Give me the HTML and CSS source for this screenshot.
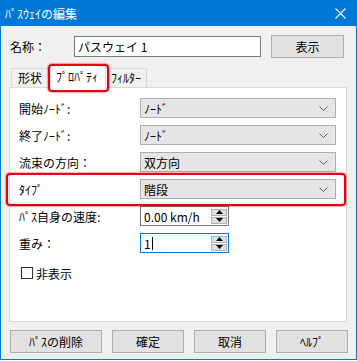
FILE: index.html
```html
<!DOCTYPE html>
<html lang="ja">
<head>
<meta charset="utf-8">
<link rel="stylesheet" href="styles.css">
</head>
<body>
<div class="window">
  <div class="titlebar">
    <span class="title">ﾊﾟｽｳｪｲの編集</span>
    <svg class="close" width="11" height="11" viewBox="0 0 11 11"><path d="M0.5 0.5L10.5 10.5M10.5 0.5L0.5 10.5" stroke="#fff" stroke-width="1.1" fill="none"/></svg>
  </div>
  <div class="content">
    <div class="name-row">
      <span class="name-label">名称：</span>
      <div class="textbox">パスウェイ 1</div>
      <button class="btn show-btn">表示</button>
    </div>
    <div class="tabs-area">
      <div class="tabs">
        <div class="tab first">形状</div>
        <div class="tab active">ﾌﾟﾛﾊﾟﾃｨ</div>
        <div class="tab">ﾌｨﾙﾀｰ</div>
      </div>
      <div class="hl hl-tab"></div>
      <div class="panel">
        <div class="row">
          <span class="label">開始ﾉｰﾄﾞ:</span>
          <div class="combo"><span>ﾉｰﾄﾞ</span><svg class="chev" width="9" height="5" viewBox="0 0 9 5"><path d="M0.5 0.5L4.5 4.5L8.5 0.5" stroke="#606060" fill="none"/></svg></div>
        </div>
        <div class="row">
          <span class="label">終了ﾉｰﾄﾞ:</span>
          <div class="combo"><span>ﾉｰﾄﾞ</span><svg class="chev" width="9" height="5" viewBox="0 0 9 5"><path d="M0.5 0.5L4.5 4.5L8.5 0.5" stroke="#606060" fill="none"/></svg></div>
        </div>
        <div class="row">
          <span class="label">流束の方向：</span>
          <div class="combo"><span>双方向</span><svg class="chev" width="9" height="5" viewBox="0 0 9 5"><path d="M0.5 0.5L4.5 4.5L8.5 0.5" stroke="#606060" fill="none"/></svg></div>
        </div>
        <div class="row type-row">
          <span class="label">ﾀｲﾌﾟ</span>
          <div class="combo"><span>階段</span><svg class="chev" width="9" height="5" viewBox="0 0 9 5"><path d="M0.5 0.5L4.5 4.5L8.5 0.5" stroke="#606060" fill="none"/></svg></div>
          <div class="hl hl-row"></div>
        </div>
        <div class="row">
          <span class="label">ﾊﾟｽ自身の速度:</span>
          <div class="spin"><span class="spin-text">0.00 km/h</span>
            <div class="spin-btns"><div class="sb"><svg width="7" height="4" viewBox="0 0 7 4"><path d="M3.5 0L7 4H0Z" fill="#000"/></svg></div><div class="sb"><svg width="7" height="4" viewBox="0 0 7 4"><path d="M0 0H7L3.5 4Z" fill="#000"/></svg></div></div>
          </div>
        </div>
        <div class="row">
          <span class="label">重み：</span>
          <div class="spin focus"><span class="spin-text">1<span class="caret"></span></span>
            <div class="spin-btns"><div class="sb"><svg width="7" height="4" viewBox="0 0 7 4"><path d="M3.5 0L7 4H0Z" fill="#000"/></svg></div><div class="sb"><svg width="7" height="4" viewBox="0 0 7 4"><path d="M0 0H7L3.5 4Z" fill="#000"/></svg></div></div>
          </div>
        </div>
        <div class="check-row">
          <span class="checkbox"></span><span>非表示</span>
        </div>
      </div>
    </div>
    <div class="buttons">
      <button class="btn wide">ﾊﾟｽの削除</button>
      <button class="btn">確定</button>
      <button class="btn">取消</button>
      <button class="btn">ﾍﾙﾌﾟ</button>
    </div>
  </div>
</div>
</body>
</html>
```

FILE: styles.css
```css
* { box-sizing: border-box; }
html, body { margin: 0; padding: 0; background: #ffffff; }
body {
  font-family: "Noto Sans CJK JP", "Noto Sans", sans-serif;
  font-size: 12px;
  color: #000;
}
.window {
  width: 357px;
  height: 360px;
  border: 1px solid #0078d7;
  background: #f0f0f0;
  display: flex;
  flex-direction: column;
}
.titlebar {
  height: 25px;
  background: #0078d7;
  color: #fff;
  display: flex;
  align-items: center;
  justify-content: space-between;
  padding: 0 10px 0 4px;
  flex-shrink: 0;
}
.title { font-size: 12px; line-height: 14px; }
.close { display: block; }
.content {
  flex: 1;
  display: flex;
  flex-direction: column;
  padding: 9px 0 0 8px;
}
.name-row {
  display: flex;
  align-items: center;
  height: 23px;
}
.name-label { width: 65px; padding-left: 1px; }
.textbox {
  width: 187px;
  height: 21px;
  background: #fff;
  border: 1px solid #7a7a7a;
  padding: 0 3px;
  line-height: 19px;
}
.btn {
  font-family: inherit;
  font-size: 12px;
  color: #000;
  background: #e1e1e1;
  border: 1px solid #adadad;
  height: 23px;
  width: 72px;
  padding: 0;
  margin: 0;
}
.show-btn { margin-left: 10px; width: 73px; }
.tabs-area { position: relative; margin-top: 6px; }
.tabs {
  display: flex;
  align-items: flex-end;
  height: 23px;
  padding-left: 2px;
  position: relative;
  z-index: 2;
}
.tab {
  height: 19px;
  border: 1px solid #d9d9d9;
  border-bottom: none;
  background: #f0f0f0;
  line-height: 17px;
  padding: 0 5px;
}
.tab.first { width: 40px; padding-left: 6px; }
.tab.active {
  width: 56px;
  background: #fff;
  margin-left: -1px;
  margin-right: -1px;
  margin-bottom: -1px;
  height: 23px;
  padding-left: 5px;
  line-height: 21px;
  position: relative;
  z-index: 3;
}
.panel {
  width: 338px;
  height: 235px;
  background: #fff;
  border: 1px solid #d9d9d9;
  padding: 10px 9px 0 8px;
  display: flex;
  flex-direction: column;
  gap: 7px;
  position: relative;
}
.row {
  display: flex;
  align-items: center;
  height: 20px;
  position: relative;
}
.label { width: 122px; padding-left: 1px; }
.combo {
  width: 196px;
  height: 20px;
  background: #e5e5e5;
  border: 1px solid #adadad;
  display: flex;
  align-items: center;
  justify-content: space-between;
  padding: 0 7px 0 3px;
}
.chev { display: block; }
.spin {
  width: 89px;
  height: 20px;
  background: #fff;
  border: 1px solid #7a7a7a;
  display: flex;
  align-items: center;
  justify-content: space-between;
  padding: 0 1px 0 3px;
}
.spin.focus { border-color: #0078d7; }
.spin-text { display: flex; align-items: center; }
.caret { display: inline-block; width: 1px; height: 13px; background: #000; margin-left: 1px; }
.spin-btns { display: flex; flex-direction: column; gap: 1px; }
.sb {
  width: 16px;
  height: 7px;
  background: #e1e1e1;
  border: 1px solid #b0b0b0;
  display: flex;
  align-items: center;
  justify-content: center;
}
.sb svg { display: block; }
.check-row {
  display: flex;
  align-items: center;
  gap: 3px;
  margin-top: 6px;
  padding-left: 3px;
  height: 14px;
}
.checkbox {
  width: 12px;
  height: 12px;
  border: 1px solid #333;
  background: #fff;
}
.buttons {
  display: flex;
  gap: 10px;
  margin-top: 8px;
  padding-left: 1px;
}
.btn.wide { width: 92px; }
.hl {
  position: absolute;
  border: 2px solid #e60012;
  border-radius: 4px;
  box-shadow: 0 0 1px 1px rgba(230, 0, 18, 0.35);
  pointer-events: none;
  z-index: 5;
}
.hl-tab { left: 39px; top: 0px; width: 61px; height: 28px; }
.hl-row { left: -12px; top: -6px; width: 340px; height: 33px; }
```
